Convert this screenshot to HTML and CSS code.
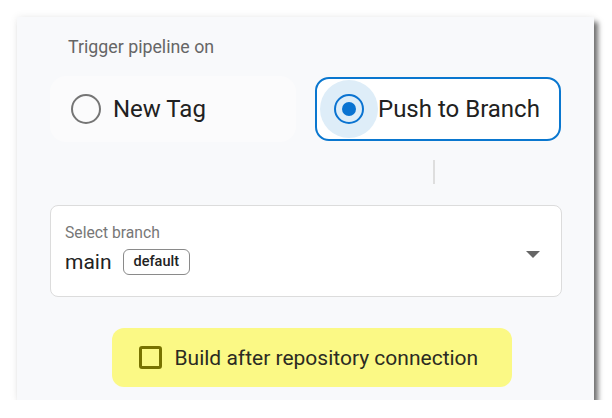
FILE: index.html
```html
<!DOCTYPE html>
<html>
<head>
<meta charset="utf-8">
<link rel="stylesheet" href="styles.css">
</head>
<body>
<div class="panel">
  <div class="title">Trigger pipeline on</div>
  <div class="options">
    <div class="option option-off">
      <span class="radio"></span>
      <span class="opt-label">New Tag</span>
    </div>
    <div class="option option-on">
      <span class="halo"><span class="radio radio-on"><span class="dot"></span></span></span>
      <span class="opt-label">Push to Branch</span>
    </div>
  </div>
  <div class="divider-row"><span class="divider"></span></div>
  <div class="select">
    <div class="select-body">
      <div class="select-label">Select branch</div>
      <div class="select-value"><span class="main">main</span><span class="chip">default</span></div>
    </div>
    <span class="caret"></span>
  </div>
  <div class="check-row">
    <div class="check">
      <span class="box"></span>
      <span class="check-label">Build after repository connection</span>
    </div>
  </div>
</div>
</body>
</html>
```
FILE: styles.css
```css
* { box-sizing: border-box; }
html, body { margin: 0; padding: 0; background: #fff; }
body { font-family: Roboto, "Noto Sans", sans-serif; }
.panel {
  margin: 17px 0 0 17px;
  width: 577px;
  height: 383px;
  background: #f8f9fb;
  box-shadow: 4px 5px 5px rgba(0,0,0,0.55), 0 0 8px rgba(0,0,0,0.08);
  padding: 0 32px 0 33px;
  display: flex;
  flex-direction: column;
}
.title {
  margin-top: 20px;
  padding-left: 18px;
  font-size: 17.8px;
  line-height: 20px;
  color: #666;
}
.options {
  display: flex;
  gap: 19px;
  margin-top: 19px;
}
.option {
  width: 246px;
  height: 66px;
  border-radius: 16px;
  display: flex;
  align-items: center;
}
.option-off {
  background: #fbfbfc;
  padding-left: 21px;
  gap: 12px;
}
.option-on {
  background: #fff;
  border: 2.5px solid #0a77cf;
  border-radius: 14px;
  height: 64px;
  margin-top: 1px;
  padding-left: 3px;
  gap: 0;
}
.radio {
  width: 30px;
  height: 30px;
  border-radius: 50%;
  border: 2.5px solid #757575;
  display: flex;
  align-items: center;
  justify-content: center;
  flex: none;
}
.halo {
  width: 58px;
  height: 58px;
  border-radius: 50%;
  background: #deedf8;
  display: flex;
  align-items: center;
  justify-content: center;
  flex: none;
}
.radio-on { border-color: #0a73d1; }
.dot { width: 14px; height: 14px; border-radius: 50%; background: #0a73d1; }
.opt-label {
  font-size: 24px;
  color: #212121;
  line-height: 28px;
}
.divider-row {
  display: flex;
  padding-left: 383px;
  margin-top: 18px;
}
.divider { width: 2px; height: 24px; background: #dedede; }
.select {
  margin-top: 21px;
  height: 92px;
  background: #fff;
  border: 1px solid #dcdcdc;
  border-radius: 8px;
  display: flex;
  align-items: center;
  padding: 0 21px 0 14px;
}
.select-body { flex: 1; margin-top: -3px; }
.select-label { font-size: 15.7px; color: #777; line-height: 18px; }
.select-value { display: flex; align-items: center; gap: 11px; margin-top: 7px; }
.main { font-size: 21px; color: #222; line-height: 26px; }
.chip {
  font-size: 14.5px;
  font-weight: 500;
  color: #222;
  border: 1px solid #8a8a8a;
  border-radius: 6px;
  padding: 0 10px;
  height: 26px;
  line-height: 24px;
}
.caret {
  width: 0; height: 0;
  border-left: 7.5px solid transparent;
  border-right: 7.5px solid transparent;
  border-top: 7px solid #666;
  margin-top: 6px;
}
.check-row { display: flex; justify-content: center; margin-top: 31px; padding-left: 28px; padding-right: 17px; }
.check {
  width: 400px;
  height: 59px;
  background: #fbf985;
  border-radius: 12px;
  display: flex;
  align-items: center;
  padding-left: 27px;
  gap: 13px;
}
.box {
  width: 23px; height: 23px;
  border: 3px solid #777200;
  border-radius: 3px;
  flex: none;
}
.check-label { font-size: 21px; color: #2b2b22; line-height: 26px; }
```
